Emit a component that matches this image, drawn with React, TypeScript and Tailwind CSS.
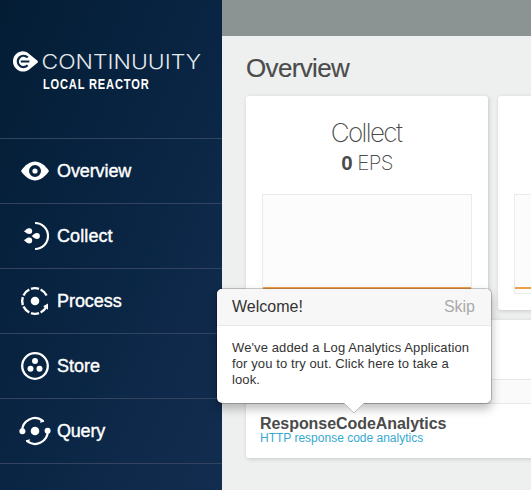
import type { ReactNode } from "react";

function LogoMark() {
  return (
    <svg width="190" height="26" viewBox="0 0 190 26" className="block">
      <path
        d="M10.4 1.2c3 0 5 .9 6.8 2.7l8.6 7.1v1.4l-8.6 7.2A10.2 10.2 0 1 1 10.4 1.2Z"
        fill="#fff"
      />
      <path d="M15.7 7.6A5.7 5.7 0 1 0 15.7 15.3M8.8 11.5H17.4" fill="none" stroke="#0b2742" strokeWidth="2.2" />
      <text
        x="29.5"
        y="19"
        textLength="159.5"
        lengthAdjust="spacingAndGlyphs"
        className="fill-[#e3e9ed] font-[Inter,sans-serif] text-[20px] font-light"
      >
        CONTINUUITY
      </text>
    </svg>
  );
}

function OverviewIcon() {
  return (
    <svg width="32" height="30" viewBox="0 0 32 30">
      <path d="M2 15C6 9 11 5.6 16 5.6S26 9 30 15c-4 6-9 9.4-14 9.4S6 21 2 15Z" fill="#fff" />
      <circle cx="16" cy="15" r="4.3" fill="#fff" stroke="#08233d" strokeWidth="3.4" />
    </svg>
  );
}

function CollectIcon() {
  return (
    <svg width="32" height="30" viewBox="0 0 32 30" fill="#fff">
      <path d="M16 2A13 13 0 0 1 16 28" fill="none" stroke="#fff" strokeWidth="2.2" />
      <path d="M4.6 10.3C6.6 9.8 7.2 7.2 10.3 7.2a2.9 2.9 0 0 1 0 5.8C7.2 13 6.6 10.8 4.6 10.3Z" />
      <path d="M4.6 19.3C6.6 18.8 7.2 16.6 10.3 16.6a2.9 2.9 0 0 1 0 5.8C7.2 22.4 6.6 19.8 4.6 19.3Z" />
      <path d="M12.4 15C14.2 14.5 15 12.1 18 12.1a2.9 2.9 0 0 1 0 5.8C15 17.9 14.2 15.5 12.4 15Z" />
    </svg>
  );
}

function ProcessIcon() {
  return (
    <svg width="32" height="30" viewBox="0 0 32 30">
      <g fill="none" stroke="#fff" strokeWidth="2.4">
        <path d="M12 2.8A12.8 12.8 0 0 1 20 2.8M21.6 3.5A12.8 12.8 0 0 1 27.6 9.6" />
        <path d="M10.3 3.5A12.8 12.8 0 0 0 4.5 9.4M3.8 11A12.8 12.8 0 0 0 3.8 19M4.5 20.6A12.8 12.8 0 0 0 10.3 26.5M12 27.2A12.8 12.8 0 0 0 20 27.2M21.6 26.5A12.8 12.8 0 0 0 27.2 21" />
      </g>
      <circle cx="16" cy="15" r="4.3" fill="#fff" />
      <path d="m24.2 20.2 4.8-2.6v6.2Z" fill="#fff" />
    </svg>
  );
}

function StoreIcon() {
  return (
    <svg width="32" height="30" viewBox="0 0 32 30" fill="#fff">
      <circle cx="16" cy="15" r="12.8" fill="none" stroke="#fff" strokeWidth="2.3" />
      <circle cx="16" cy="10" r="3" />
      <circle cx="11.5" cy="17.8" r="3" />
      <circle cx="20.5" cy="17.8" r="3" />
    </svg>
  );
}

function QueryIcon() {
  return (
    <svg width="32" height="30" viewBox="0 0 32 30" fill="#fff">
      <g fill="none" stroke="#fff" strokeWidth="2.2" strokeLinecap="round">
        <path d="M3.2 15A12.8 12.8 0 0 1 23.8 4.8" />
        <path d="M28.8 15A12.8 12.8 0 0 1 8.2 25.2" />
      </g>
      <path d="m22.4 2.4 3 3.4-4.4.9ZM9.6 27.6l-3-3.4 4.4-.9Z" />
      <circle cx="16" cy="15" r="4.3" />
      <circle cx="3.4" cy="15.2" r="3" />
      <circle cx="28.6" cy="14.8" r="3" />
    </svg>
  );
}

const navItems: { label: string; icon: ReactNode; text: string }[] = [
  { label: "Overview", icon: <OverviewIcon />, text: "tracking-[-0.1px]" },
  { label: "Collect", icon: <CollectIcon />, text: "tracking-[0.1px]" },
  { label: "Process", icon: <ProcessIcon />, text: "tracking-[-0.05px]" },
  { label: "Store", icon: <StoreIcon />, text: "tracking-normal" },
  { label: "Query", icon: <QueryIcon />, text: "tracking-[-0.2px]" },
];

function Sidebar() {
  return (
    <aside className="flex h-full w-[222px] shrink-0 flex-col bg-linear-to-br from-[#041d35] via-[#092543] to-[#132d50]">
      <div className="h-[138px] shrink-0 pt-[50px] pl-3">
        <LogoMark />
        <svg width="120" height="16" className="ml-[30px] block">
          <text
            x="1.2"
            y="13"
            textLength="143"
            lengthAdjust="spacing"
            transform="scale(0.74 1)"
            className="fill-white font-['Liberation_Sans',Arial,sans-serif] text-[15px] font-bold"
          >
            LOCAL REACTOR
          </text>
        </svg>
      </div>
      <nav className="border-b border-[#32445f]">
        {navItems.map((item) => (
          <a key={item.label} className="flex h-[65px] items-center border-t border-[#32445f] pl-[19px]">
            {item.icon}
            <span className={`ml-[6px] text-[18px] leading-6 text-white [-webkit-text-stroke:0.4px_white] ${item.text}`}>
              {item.label}
            </span>
          </a>
        ))}
      </nav>
    </aside>
  );
}

function MetricCard({ title, value }: { title?: string; value?: string }) {
  return (
    <section className="flex h-[214px] w-[242px] shrink-0 flex-col rounded-[3px] bg-white px-4 pt-[22px] text-center text-[#4b4b4b] shadow-[1px_1px_4px_rgba(0,0,0,0.17)]">
      <div className="h-[76px] font-[Inter,sans-serif]">
        {title && (
          <>
            <h2 className="-ml-[2px] text-[26px] leading-[30px] font-extralight tracking-[-1.6px]">{title}</h2>
            <p className="text-[20.5px] leading-[29px] font-extralight tracking-[-0.6px]">
              <b className="font-['Liberation_Sans',Arial,sans-serif] font-bold">{value}</b> EPS
            </p>
          </>
        )}
      </div>
      <div className="h-[100px] border border-[#ebebeb] bg-[#fcfcfc] pt-[92px]">
        <div className="h-[2px] bg-[#ee9f4c]" />
      </div>
    </section>
  );
}

function WelcomePopover() {
  return (
    <div className="absolute top-[288px] left-[216px] h-[116px] w-[276px] rounded-[6px] border border-black/20 bg-white bg-clip-padding shadow-[0_5px_10px_rgba(0,0,0,0.25)]">
      <div className="flex h-[37px] items-center justify-between rounded-t-[5px] border-b border-[#e9e9e9] bg-[#f7f7f7] px-[15px] pr-4 text-[16px]">
        <span className="text-[#333]">Welcome!</span>
        <span className="text-[#aaa]">Skip</span>
      </div>
      <p className="px-[15px] pt-[14px] text-[13px] leading-4 tracking-[0.11px] whitespace-nowrap text-[#333]">
        We've added a Log Analytics Application
        <br />
        for you to try out. Click here to take a<br />
        look.
      </p>
      <svg width="22" height="12" className="absolute top-[113px] left-[126px]">
        <path d="M0 0 11 11 22 0Z" fill="#fff" />
        <path d="M1 1 11 11 21 1" fill="none" stroke="#bdbdbd" />
      </svg>
    </div>
  );
}

export default function App() {
  return (
    <div className="relative flex h-[490px] w-[531px] overflow-hidden bg-[#eef0f0] font-['Liberation_Sans',Arial,sans-serif]">
      <Sidebar />
      <main className="flex min-w-0 flex-1 flex-col overflow-hidden">
        <header className="h-9 shrink-0 bg-[#8b9393]" />
        <div className="pl-6">
          <h1 className="h-[60px] pt-[17px] text-[26px] leading-[30px] tracking-[-0.65px] text-[#4b4b4b] [-webkit-text-stroke:0.15px_#4b4b4b]">
            Overview
          </h1>
          <div className="flex gap-[10px]">
            <MetricCard title="Collect" value="0" />
            <MetricCard />
          </div>
          <section className="mt-[10px] h-[138px] w-[500px] rounded-[3px] bg-white pt-[59px] shadow-[1px_1px_4px_rgba(0,0,0,0.17)]">
            <div className="h-[25px] border-y border-[#e8e8e8] bg-[#fafafa]" />
            <div className="pt-[12px] pl-[14px]">
              <h3 className="text-[16px] leading-4 font-bold tracking-[-0.06px] text-[#4b4b4b]">ResponseCodeAnalytics</h3>
              <p className="text-[12px] leading-[13px] text-[#36a9d1]">HTTP response code analytics</p>
            </div>
          </section>
        </div>
      </main>
      <WelcomePopover />
    </div>
  );
}
